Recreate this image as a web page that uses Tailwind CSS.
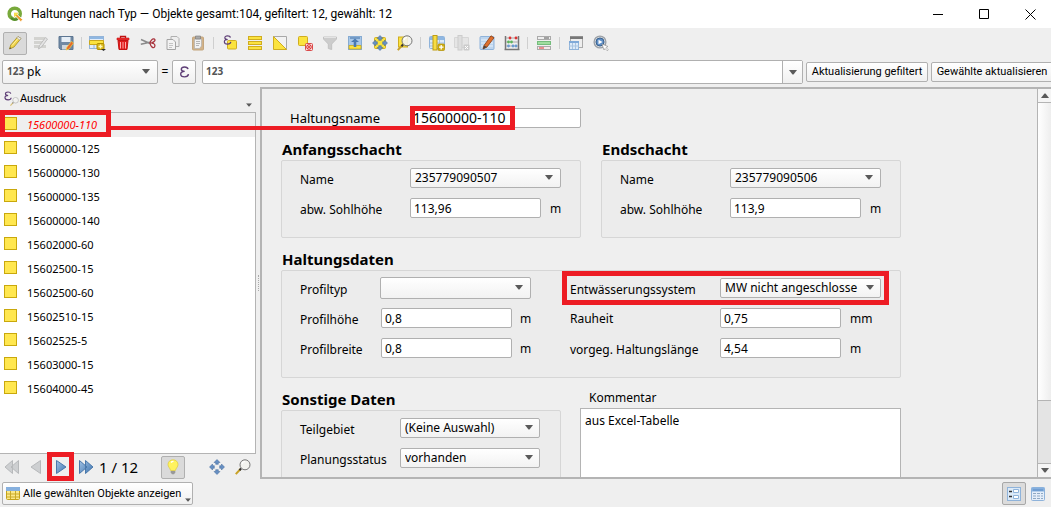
<!DOCTYPE html>
<html lang="de">
<head>
<meta charset="utf-8">
<title>Haltungen nach Typ</title>
<script src="https://cdn.jsdelivr.net/npm/@tailwindcss/browser@4"></script>
</head>
<body class="h-screen flex flex-col overflow-hidden bg-[#efefef] text-black text-[11px] leading-4 font-['Noto_Sans','Open_Sans',sans-serif]">

<svg class="absolute size-0" aria-hidden="true">
  <defs>
    <linearGradient id="blue" x1="0" y1="0" x2="1" y2="1"><stop offset="0" stop-color="#9fc0e4"/><stop offset="1" stop-color="#4076b0"/></linearGradient>
    <symbol id="down" viewBox="0 0 8 5"><path d="M0 0h8L4.500 4.500h-1z" fill="#5a5a5a"/></symbol>
    <symbol id="table" viewBox="0 0 16 16"><rect x=".5" y="1.500" width="15" height="12" rx="1" fill="#dceaf8" stroke="#8fb3da"/><path d="M1 2h14v3H1z" fill="#8fb7e2"/><path d="M1 8h14M1 11h14M5.500 5v8M10.500 5v8" stroke="#a8c3e0"/></symbol>
    <symbol id="arrows" viewBox="0 0 16 16"><g fill="#6790c4" stroke="#3f6699" stroke-width=".5"><path d="M8 .5l3 3H9.300v1.800H6.700V3.500H5z"/><path d="M8 15.500l3-3H9.300v-1.800H6.700v1.800H5z"/><path d="M.5 8l3-3v1.700h1.800v2.600H3.500V11z"/><path d="M15.500 8l-3-3v1.700h-1.800v2.600h1.800V11z"/></g></symbol>
    <symbol id="lens" viewBox="0 0 16 16"><path d="M.8 15.200L5.500 10" stroke="#c9a227" stroke-width="2"/><path d="M4.500 11.200l1.600-1.700" stroke="#333" stroke-width="2"/><circle cx="10" cy="5.800" r="5" fill="#f3f3ee" fill-opacity=".9" stroke="#777"/><path d="M7 5a3.200 3.200 0 0 1 3-2.500" fill="none" stroke="#fff" stroke-width="1.200"/></symbol>
    <symbol id="eps" viewBox="0 0 10 12"><path d="M8.500 3.200C8.200 1.500 6.500 1 5 1 3 1 1.800 1.900 1.800 3.300c0 1.400 1.200 2.100 3.400 2.100C2.800 5.400 1.200 6.300 1.200 8c0 1.900 1.700 2.900 3.900 2.900 2.300 0 3.600-.9 3.900-2.700" fill="none" stroke="#5e3e76" stroke-width="1.400"/></symbol>
  </defs>
</svg>

<!-- Title bar -->
<header class="h-7 shrink-0 flex items-center bg-white pl-[7px]">
  <svg class="size-4 mr-2" viewBox="0 0 16 16"><circle cx="7.700" cy="7.700" r="5.500" fill="none" stroke="#78a93b" stroke-width="3.600"/><path d="M4 12a5.500 5.500 0 0 0 7 .6" fill="none" stroke="#4f8a2c" stroke-width="2"/><path d="M7 6.800h4.300l-1 1.800 5.400 5-1.900 2.100-5-5.400L7 11.500z" fill="#ee9a28" stroke="#fff" stroke-width=".8"/><path d="M7 6.800h4.300l-1 1.800L7 11z" fill="#f4e04d"/></svg>
  <h1 class="flex-1 text-xs whitespace-nowrap font-['Roboto','Noto_Sans',sans-serif]">Haltungen nach Typ — Objekte gesamt:104, gefiltert: 12, gewählt: 12</h1>
  <button aria-label="Minimieren" class="w-[46px] h-6 grid place-items-center"><svg class="w-[11px] h-[11px]" viewBox="0 0 11 11"><path d="M0 5.500h10" stroke="#000"/></svg></button>
  <button aria-label="Maximieren" class="w-[46px] h-6 grid place-items-center"><svg class="w-[11px] h-[11px]" viewBox="0 0 11 11"><path d="M.5.5h9v9h-9z" fill="none" stroke="#000"/></svg></button>
  <button aria-label="Schließen" class="w-[46px] -mr-0.5 h-6 grid place-items-center"><svg class="w-[11px] h-[11px]" viewBox="0 0 11 11"><path d="M.5.5l10 10M10.500.5l-10 10" stroke="#000"/></svg></button>
</header>

<!-- Toolbar -->
<div role="toolbar" class="h-[31px] shrink-0 flex items-center pl-[3px] pb-px">
  <button aria-label="Bearbeiten" class="w-6 mr-px h-[23px] rounded-xs border border-[#b0b0b0] bg-[#dadada] grid place-items-center"><svg class="size-4" viewBox="0 0 16 16"><path d="M2.500 14l1.200-4L11 1.500l3 2L7 12z" fill="#f0d44c" stroke="#a58b1f" stroke-width=".8"/><path d="M11 1.500l3 2-1.200 1.500-3-2z" fill="#eee" stroke="#999" stroke-width=".6"/><path d="M2.500 14l.5-1.800 1.400 1z" fill="#444"/><path d="M5 10.500l6-7" stroke="#fff3a0"/></svg></button>
  <button aria-label="Mehrfachbearbeitung" class="w-[25px] h-6 grid place-items-center"><svg class="size-4" viewBox="0 0 16 16"><path d="M1 3.500h11M1 7.500h10M1 11.500h12" stroke="#d3d3d0" stroke-width="3"/><path d="M5.500 14l1-3.500 6-8 2 1.500-6 8z" fill="#e4e4e4" stroke="#b4b4b4" stroke-width=".8"/></svg></button>
  <button aria-label="Speichern" class="w-[25px] h-6 grid place-items-center"><svg class="size-4" viewBox="0 0 16 16"><path d="M1 1.500h14v13H2.500L1 13z" fill="#7189a3" stroke="#5d7692"/><path d="M3.500 2h9v5h-9z" fill="#e6eef6"/><path d="M4 10h7v4.500H4z" fill="#cfd6dd"/><path d="M8 15l1-3 4.500-5.500 2 1.500L11 14z" fill="#e8652c" stroke="#f4d940" stroke-width=".7"/></svg></button>
  <i class="w-[7px] h-3 grid place-items-center"><b class="w-px h-3 bg-[#cfcfcf]"></b></i>
  <button aria-label="Objekt hinzufügen" class="w-[25px] h-6 grid place-items-center"><svg class="w-[17px] h-4" viewBox="0 0 17 16"><rect x=".5" y="1.500" width="14" height="12" fill="#e3edf8" stroke="#93b4d8"/><path d="M1 2h13v2H1z" fill="#8fb7e2"/><path d="M.5 5.500h14v4H.5z" fill="#fbe33e" stroke="#c9a81c"/><path d="M5 10v3" stroke="#93b4d8"/><rect x="8" y="8.500" width="7" height="6" rx="1" fill="#d9b71d" stroke="#b19000"/><path d="M11.500 9.500v4M9.500 11.500h4" stroke="#fff8b8" stroke-width="1.300"/><path d="M12 14h5l-2.500 2z" fill="#333"/></svg></button>
  <button aria-label="Löschen" class="w-[25px] h-6 grid place-items-center"><svg class="size-4" viewBox="0 0 16 16"><path d="M3 5.500h10l-1 9h-8z" fill="#e01b1b" stroke="#c41414"/><path d="M2 3h12v2H2z" fill="#ee2c2c" stroke="#c41414" stroke-width=".6"/><path d="M5.500 3V1.500h5V3" fill="none" stroke="#c01010" stroke-width="1.300"/><path d="M5.500 7v6.500M8 7v6.500M10.500 7v6.500" stroke="#ffaaaa"/></svg></button>
  <button aria-label="Ausschneiden" class="w-[25px] h-6 grid place-items-center"><svg class="size-4" viewBox="0 0 16 16"><path d="M1 4.500l9.500 4.300M.8 9.300L11 7" stroke="#8a8a8a" stroke-width="1.500"/><path d="M10 8c1-3 2.500-4.500 4.300-4 1.500.6.500 3.200-3 4 3.200 0 4.200 2 3.200 4-1.200 1.800-3.800-.5-4.200-3z" fill="none" stroke="#a9343e" stroke-width="1.300"/></svg></button>
  <button aria-label="Kopieren" class="w-[25px] h-6 grid place-items-center"><svg class="size-4" viewBox="0 0 16 16"><path d="M6 1.500h6l2 2v8H6z" fill="#eee" stroke="#b0b0b0"/><path d="M2 4.500h6l2.500 2.500v7.500H2z" fill="#f3f3f3" stroke="#a4a4a4"/><path d="M4 8.500h4M4 10.500h4M4 12.500h3" stroke="#c4c4c4"/></svg></button>
  <button aria-label="Einfügen" class="w-[25px] h-6 grid place-items-center"><svg class="size-4" viewBox="0 0 16 16"><rect x="2.500" y="2" width="11" height="13" rx="1" fill="#d2b38a" stroke="#c4a67e"/><path d="M4.500 4h7v7l-2 2.500h-5z" fill="#f1f1f1" stroke="#aaa" stroke-width=".6"/><path d="M5.500 1h5v3h-5z" fill="#aaa" stroke="#777" stroke-width=".6"/><path d="M6 6.500h4M6 8.500h4M6 10.500h3" stroke="#b5b5b5"/></svg></button>
  <i class="w-[7px] h-3 grid place-items-center"><b class="w-px h-3 bg-[#cfcfcf]"></b></i>
  <button aria-label="Mit Ausdruck wählen" class="w-[25px] h-6 grid place-items-center"><svg class="size-4" viewBox="0 0 16 16"><rect x="5.500" y="5.500" width="9" height="8.500" rx="1" fill="#fbe33e" stroke="#d0ad1f"/><use href="#eps" x="1" y="0" width="9" height="10"/></svg></button>
  <button aria-label="Alle wählen" class="w-[25px] h-6 grid place-items-center"><svg class="size-4" viewBox="0 0 16 16"><g fill="#fbe33e" stroke="#d0ad1f"><rect x="1.500" y="1.500" width="13" height="3"/><rect x="1.500" y="6.500" width="13" height="3"/><rect x="1.500" y="11.500" width="13" height="3"/></g></svg></button>
  <button aria-label="Auswahl umkehren" class="w-[25px] h-6 grid place-items-center"><svg class="size-4" viewBox="0 0 16 16"><path d="M1.500 1.500h13v13z" fill="#f2f2f2" stroke="#a8a8a8"/><path d="M1.500 1.500v13h13z" fill="#fbe33e" stroke="#d0ad1f"/></svg></button>
  <button aria-label="Auswahl aufheben" class="w-[25px] h-6 grid place-items-center"><svg class="size-4" viewBox="0 0 16 16"><rect x="1.500" y="1.500" width="9" height="9" rx="1" fill="#fbe33e" stroke="#d0ad1f"/><rect x="8.500" y="8.500" width="7" height="7" rx="1" fill="#fbdede" stroke="#da4a4a"/><circle cx="12" cy="12" r="2.300" fill="none" stroke="#d83030"/><path d="M10 10l4 4M14 10l-4 4" stroke="#d83030" stroke-width=".8"/></svg></button>
  <button aria-label="Filtern" class="w-[25px] h-6 grid place-items-center"><svg class="size-4" viewBox="0 0 16 16"><path d="M1.500 2h13v2L9.700 9v5.500l-3.400-1V9L1.500 4z" fill="#cccccc" stroke="#c2c2c2"/><path d="M2 2.500h12" stroke="#e4e4e4"/></svg></button>
  <button aria-label="Auswahl nach oben" class="w-[25px] h-6 grid place-items-center"><svg class="size-4" viewBox="0 0 16 16"><rect x="1.500" y="1.500" width="13" height="13" fill="#a9c8e8" stroke="#86abd2"/><path d="M2 10.500h12v3.500H2z" fill="#fbe33e" stroke="#c9a81c" stroke-width=".8"/><path d="M3 3h10" stroke="#3f6ea5"/><path d="M8 3.500l4 3.500H9.300v5H6.700V7H4z" fill="#4a7ab2"/></svg></button>
  <button aria-label="Zur Auswahl schieben" class="w-[25px] h-6 grid place-items-center"><svg class="size-4" viewBox="0 0 16 16"><rect x="2.500" y="2.500" width="11" height="11" rx="1" fill="#fbe33e" stroke="#d0ad1f"/><use href="#arrows" width="16" height="16"/></svg></button>
  <button aria-label="Auf Auswahl zoomen" class="w-[25px] h-6 grid place-items-center"><svg class="size-4" viewBox="0 0 16 16"><rect x="1.500" y="2" width="9" height="10" fill="#fbe33e" stroke="#d0ad1f"/><use href="#lens" width="16" height="16"/></svg></button>
  <i class="w-[7px] h-3 grid place-items-center"><b class="w-px h-3 bg-[#cfcfcf]"></b></i>
  <button aria-label="Neues Feld" class="w-[25px] h-6 grid place-items-center"><svg class="size-4" viewBox="0 0 16 16"><use href="#table" width="16" height="16"/><rect x="4" y=".5" width="4" height="14.500" fill="#f7dd45" stroke="#c09d12"/><rect x="9" y="9" width="6.500" height="6.500" rx="1" fill="#d0ae14" stroke="#b19000" stroke-width=".7"/><path d="M12.200 10v4.500M10 12.200h4.500" stroke="#fff" stroke-width="1.300"/></svg></button>
  <button aria-label="Feld löschen" class="w-[25px] h-6 grid place-items-center"><svg class="size-4" viewBox="0 0 16 16"><path d="M.5 2.500h14v10H.5z" fill="#e5e5e5" stroke="#d6d6d6"/><rect x="4" y=".5" width="4" height="14.500" fill="#dedede" stroke="#cccccc"/><rect x="9.500" y="9.500" width="6" height="6" rx="1" fill="#ccc"/><path d="M11 11l3 3M14 11l-3 3" stroke="#fff"/></svg></button>
  <button aria-label="Felder organisieren" class="w-[25px] h-6 grid place-items-center"><svg class="size-4" viewBox="0 0 16 16"><rect x="1" y="1.500" width="14" height="13" rx="1" fill="#bdd5ee" stroke="#8fb3da"/><path d="M2 5h12M2 8h12M2 11h12" stroke="#e8f1fa"/><path d="M4 14l1-3.500L12 .8l3 2L8 12z" fill="#dd6f2d" stroke="#8a3d12" stroke-width=".8"/><path d="M4 14l1-3.500 3 1.500z" fill="#444"/></svg></button>
  <button aria-label="Feldrechner" class="w-[25px] h-6 grid place-items-center"><svg class="size-4" viewBox="0 0 16 16"><path d="M1.500 1v14M14.500 1v14M.5 14.500h15" stroke="#777" stroke-width="1.500"/><path d="M2 3h12M2 7h12M2 11h12" stroke="#aaa"/><g fill="#d33"><circle cx="6" cy="3" r="1.400"/><circle cx="12" cy="3" r="1.400"/></g><g fill="#5cb55c"><circle cx="4.500" cy="7" r="1.400"/><circle cx="7.500" cy="7" r="1.400"/></g><g fill="#6a9bd0"><circle cx="4.500" cy="11" r="1.400"/><circle cx="9" cy="11" r="1.400"/><circle cx="12" cy="11" r="1.400"/></g></svg></button>
  <i class="w-[7px] h-3 grid place-items-center"><b class="w-px h-3 bg-[#cfcfcf]"></b></i>
  <button aria-label="Bedingte Formatierung" class="w-[25px] h-6 grid place-items-center"><svg class="size-4" viewBox="0 0 16 16"><rect x="1.500" y="1.500" width="13" height="3" fill="#eee" stroke="#aaa"/><rect x="1.500" y="6.500" width="13" height="3" fill="#9fdd9f" stroke="#74bd7c"/><rect x="1.500" y="11.500" width="13" height="3" fill="#f3eaea" stroke="#aaa"/><path d="M8 3h5" stroke="#555"/><path d="M3 13h5" stroke="#d33"/></svg></button>
  <i class="w-[7px] h-3 grid place-items-center"><b class="w-px h-3 bg-[#cfcfcf]"></b></i>
  <button aria-label="Andocken" class="w-[25px] h-6 grid place-items-center"><svg class="size-4" viewBox="0 0 16 16"><rect x="2.500" y="1.500" width="12" height="11" fill="#eee" stroke="#aaa"/><path d="M2 1.500h13v2.500H2z" fill="#777"/><rect x="1.500" y="6.500" width="9" height="8" fill="#dceaf8" stroke="#8fb3da"/><path d="M1 7h10" stroke="#7fa9d8" stroke-width="2"/><path d="M4.500 8v6M7.500 8v6M1 11h10" stroke="#a8c3e0"/></svg></button>
  <button aria-label="Aktionen" class="w-[25px] h-6 grid place-items-center"><svg class="size-4" viewBox="0 0 16 16"><circle cx="7" cy="7" r="5.900" fill="#d4d7da" stroke="#9ba0a6" stroke-width="1.300"/><circle cx="7" cy="7" r="4" fill="#5f8fc6" stroke="#39618f"/><path d="M5.500 4.800L9.500 7l-4 2.200z" fill="#fff"/><path d="M9 9l6 2.500-2 1 2.300 2.300-1 1L12 13.500 11 15z" fill="#fff" stroke="#888" stroke-width=".6"/></svg></button>
</div>

<!-- Field calculator bar -->
<div class="h-[27px] shrink-0 flex items-start pl-[2px] pt-px">
  <div class="relative w-[156px] h-6 shrink-0">
    <select aria-label="Feld" class="appearance-none size-full pl-6 rounded-xs border border-[#b0b0b0] bg-linear-to-b from-white to-[#f0f0f0] text-xs leading-5"><option>pk</option></select>
    <span class="absolute left-[5px] top-[3px] text-[10px] font-bold text-[#555]">123</span>
    <svg class="absolute right-2 top-[9px] w-2 h-[5px] pointer-events-none"><use href="#down"/></svg>
  </div>
  <span class="w-[14px] text-center text-xs leading-6">=</span>
  <button aria-label="Ausdruckseditor" class="w-6 h-6 shrink-0 rounded-xs border border-[#b0b0b0] bg-linear-to-b from-white to-[#f0f0f0] grid place-items-center"><svg class="w-[11px] h-3"><use href="#eps"/></svg></button>
  <div class="relative flex-1 h-6 ml-1.5 mr-[3px] flex rounded-xs border border-[#b0b0b0] bg-white">
    <span class="absolute left-[3px] top-[2px] text-[10px] font-bold text-[#555]">123</span>
    <input type="text" aria-label="Ausdruck" class="flex-1 min-w-0 pl-6 outline-none">
    <button aria-label="Verlauf" class="w-5 border-l border-[#b0b0b0] bg-linear-to-b from-white to-[#f0f0f0] grid place-items-center"><svg class="w-2 h-[5px]"><use href="#down"/></svg></button>
  </div>
  <button class="w-[122px] h-5 mt-0.5 mr-[3px] shrink-0 whitespace-nowrap rounded-xs border border-[#b0b0b0] bg-linear-to-b from-white to-[#f0f0f0] font-['Roboto','Noto_Sans',sans-serif]">Aktualisierung gefiltert</button>
  <button class="w-[122px] h-5 mt-0.5 -mr-0.5 shrink-0 whitespace-nowrap rounded-xs border border-[#b0b0b0] bg-linear-to-b from-white to-[#f0f0f0] font-['Roboto','Noto_Sans',sans-serif]">Gewählte aktualisieren</button>
</div>

<main class="relative flex-1 min-h-0 flex">
  <!-- Feature list -->
  <section class="w-[256px] shrink-0 flex flex-col">
    <button class="h-[26px] shrink-0 flex items-center pl-1 pr-1 text-left">
      <svg class="w-4 h-4" viewBox="0 0 16 16"><use href="#eps" width="8" height="10"/><g opacity=".6"><use href="#lens" x="6" y="6" width="9" height="9"/></g></svg>
      <span class="flex-1 font-['Roboto','Noto_Sans',sans-serif]">Ausdruck</span>
      <svg class="w-[6px] h-1 mt-3" viewBox="0 0 8 5"><use href="#down"/></svg>
    </button>
    <ul class="flex-1 min-h-0 overflow-hidden bg-white border border-l-0 border-[#b4b4b4]">
      <li class="h-6 flex items-center pl-1 bg-[#efefef] italic text-[#f00]"><i class="size-[13px] mr-[10px] mb-1 bg-[#ffe74f] border border-[#c9a80c]"></i>15600000-110</li>
      <li class="h-6 flex items-center pl-1"><i class="size-[13px] mr-[10px] mb-1 bg-[#ffe74f] border border-[#c9a80c]"></i>15600000-125</li>
      <li class="h-6 flex items-center pl-1"><i class="size-[13px] mr-[10px] mb-1 bg-[#ffe74f] border border-[#c9a80c]"></i>15600000-130</li>
      <li class="h-6 flex items-center pl-1"><i class="size-[13px] mr-[10px] mb-1 bg-[#ffe74f] border border-[#c9a80c]"></i>15600000-135</li>
      <li class="h-6 flex items-center pl-1"><i class="size-[13px] mr-[10px] mb-1 bg-[#ffe74f] border border-[#c9a80c]"></i>15600000-140</li>
      <li class="h-6 flex items-center pl-1"><i class="size-[13px] mr-[10px] mb-1 bg-[#ffe74f] border border-[#c9a80c]"></i>15602000-60</li>
      <li class="h-6 flex items-center pl-1"><i class="size-[13px] mr-[10px] mb-1 bg-[#ffe74f] border border-[#c9a80c]"></i>15602500-15</li>
      <li class="h-6 flex items-center pl-1"><i class="size-[13px] mr-[10px] mb-1 bg-[#ffe74f] border border-[#c9a80c]"></i>15602500-60</li>
      <li class="h-6 flex items-center pl-1"><i class="size-[13px] mr-[10px] mb-1 bg-[#ffe74f] border border-[#c9a80c]"></i>15602510-15</li>
      <li class="h-6 flex items-center pl-1"><i class="size-[13px] mr-[10px] mb-1 bg-[#ffe74f] border border-[#c9a80c]"></i>15602525-5</li>
      <li class="h-6 flex items-center pl-1"><i class="size-[13px] mr-[10px] mb-1 bg-[#ffe74f] border border-[#c9a80c]"></i>15603000-15</li>
      <li class="h-6 flex items-center pl-1"><i class="size-[13px] mr-[10px] mb-1 bg-[#ffe74f] border border-[#c9a80c]"></i>15604000-45</li>
    </ul>
    <nav class="h-[26px] shrink-0 flex items-center">
      <button aria-label="Erstes" class="w-6 h-6 grid place-items-center"><svg class="size-4" viewBox="0 0 16 16"><path d="M8.500 1.500v13L1 8zM14.500 1.500v13L7 8z" fill="#cdcfd1" stroke="#b7b9bb"/></svg></button>
      <button aria-label="Vorheriges" class="w-6 h-6 grid place-items-center"><svg class="size-4" viewBox="0 0 16 16"><path d="M12.500 1.500v13L3 8z" fill="#cdcfd1" stroke="#b7b9bb"/></svg></button>
      <button aria-label="Nächstes" class="relative w-[25px] h-6 grid place-items-center"><svg class="size-4" viewBox="0 0 16 16"><path d="M3.500 1.500v13L13 8z" fill="url(#blue)" stroke="#4a78ab"/></svg><b class="absolute -left-px -top-[3px] w-[27px] h-[29px] border-5 border-[#ed1c24]"></b></button>
      <button aria-label="Letztes" class="w-[25px] h-6 grid place-items-center"><svg class="size-4" viewBox="0 0 16 16"><path d="M1.500 1.500v13L9 8zM7.500 1.500v13L15 8z" fill="url(#blue)" stroke="#4a78ab"/></svg></button>
      <output class="w-[63px] pl-px text-[15px] leading-5 whitespace-nowrap">1 / 12</output>
      <button aria-label="Hervorheben" class="w-6 h-[23px] rounded-xs border border-[#b0b0b0] bg-[#dadada] grid place-items-center"><svg class="size-4" viewBox="0 0 16 16"><path d="M8 .8c3 0 5 2.100 5 4.700 0 2.400-2 3.500-2.600 6H5.600C5 9 3 7.900 3 5.500 3 2.900 5 .8 8 .8z" fill="#fff35e" stroke="#ddc93a" stroke-width=".7"/><path d="M5.700 12h4.600v1.500L9 15.300H7L5.700 13.500z" fill="#999"/><path d="M6 3.500A3 3 0 0 1 8.500 2.300" fill="none" stroke="#fff" stroke-width="1.300"/></svg></button>
      <button aria-label="Schwenken" class="w-6 h-6 ml-5 grid place-items-center"><svg class="size-4"><use href="#arrows"/></svg></button>
      <button aria-label="Zoomen" class="w-6 h-6 ml-0.5 grid place-items-center"><svg class="size-4"><use href="#lens"/></svg></button>
    </nav>
  </section>
  <div class="w-1 shrink-0 grid place-items-center"><i class="h-4 border-l border-dotted border-[#aaa]"></i></div>

  <!-- Form -->
  <section class="flex-1 min-w-0 mt-px mb-px flex border-2 border-r-0 border-[#b4b4b4]">
    <form class="flex-1 min-w-0 overflow-hidden pl-[19px] pt-[19px] text-xs leading-4">
      <div class="flex items-center h-5 pl-[9px]">
        <label for="hn" class="w-[121px] text-[13px]">Haltungsname</label>
        <div class="relative">
          <input id="hn" value="15600000-110" class="block w-[170px] h-5 px-px rounded-xs border border-[#b0b0b0] bg-white text-sm">
          <b class="absolute -left-px -top-0.5 w-[105px] h-6 border-5 border-[#ed1c24] pointer-events-none"></b>
        </div>
      </div>
      <div class="flex gap-5 pt-3">
        <section class="w-[300px] shrink-0">
          <h2 class="h-5 pl-px text-[15px] leading-[18px] font-bold">Anfangsschacht</h2>
          <div class="h-[78px] pl-[18px] pt-[7px] flex flex-col gap-2.5 rounded-xs border border-[#d6d6d6] bg-[#ececec]">
            <div class="flex items-center h-5"><label for="an" class="w-[110px] pt-1">Name</label><div class="relative w-[151px] h-5"><select id="an" class="appearance-none block size-full pl-1 rounded-xs border border-[#b0b0b0] bg-linear-to-b from-white to-[#f2f2f2]"><option>235779090507</option></select><svg class="absolute right-2 top-[7px] w-2 h-[5px] pointer-events-none"><use href="#down"/></svg></div></div>
            <div class="flex items-center h-5"><label for="as" class="w-[110px] pt-1">abw. Sohlhöhe</label><input id="as" value="113,96" class="w-[131px] h-5 px-[3px] rounded-xs border border-[#b0b0b0] bg-white"><span class="pl-[9px] pt-0.5">m</span></div>
          </div>
        </section>
        <section class="w-[300px] shrink-0">
          <h2 class="h-5 pl-px text-[15px] leading-[18px] font-bold">Endschacht</h2>
          <div class="h-[78px] pl-[18px] pt-[7px] flex flex-col gap-2.5 rounded-xs border border-[#d6d6d6] bg-[#ececec]">
            <div class="flex items-center h-5"><label for="en" class="w-[110px] pt-1">Name</label><div class="relative w-[151px] h-5"><select id="en" class="appearance-none block size-full pl-1 rounded-xs border border-[#b0b0b0] bg-linear-to-b from-white to-[#f2f2f2]"><option>235779090506</option></select><svg class="absolute right-2 top-[7px] w-2 h-[5px] pointer-events-none"><use href="#down"/></svg></div></div>
            <div class="flex items-center h-5"><label for="es" class="w-[110px] pt-1">abw. Sohlhöhe</label><input id="es" value="113,9" class="w-[131px] h-5 px-[3px] rounded-xs border border-[#b0b0b0] bg-white"><span class="pl-[9px] pt-0.5">m</span></div>
          </div>
        </section>
      </div>
      <section class="w-[620px] pt-3">
        <h2 class="h-5 pl-px text-[15px] leading-[18px] font-bold">Haltungsdaten</h2>
        <div class="h-[108px] pl-[18px] pt-[7px] flex rounded-xs border border-[#d6d6d6] bg-[#ececec]">
          <div class="w-[270px] shrink-0 flex flex-col gap-2.5">
            <div class="flex items-center h-5"><label for="pt" class="w-20 pt-1">Profiltyp</label><div class="relative w-[151px] h-[22px]"><select id="pt" class="appearance-none block size-full pl-1 rounded-xs border border-[#b0b0b0] bg-linear-to-b from-white to-[#f2f2f2]"><option></option></select><svg class="absolute right-2 top-2 w-2 h-[5px] pointer-events-none"><use href="#down"/></svg></div></div>
            <div class="flex items-center h-5"><label for="ph" class="w-[81px] pt-1">Profilhöhe</label><input id="ph" value="0,8" class="w-[131px] h-5 px-[3px] rounded-xs border border-[#b0b0b0] bg-white"><span class="pl-2 pt-0.5">m</span></div>
            <div class="flex items-center h-5"><label for="pb" class="w-[81px] pt-1">Profilbreite</label><input id="pb" value="0,8" class="w-[131px] h-5 px-[3px] rounded-xs border border-[#b0b0b0] bg-white"><span class="pl-2 pt-0.5">m</span></div>
          </div>
          <div class="flex-1 flex flex-col gap-2.5">
            <div class="relative flex items-center h-5"><label for="ew" class="w-[150px] pt-1">Entwässerungssystem</label><div class="relative w-[161px] h-5"><select id="ew" class="appearance-none block size-full pl-1 rounded-xs border border-[#b0b0b0] bg-linear-to-b from-white to-[#f2f2f2]"><option>MW nicht angeschlosse</option></select><svg class="absolute right-[7px] top-[7px] w-2 h-[5px] pointer-events-none"><use href="#down"/></svg></div><b class="absolute -left-2 -top-[7px] w-[327px] h-[34px] border-5 border-[#ed1c24] pointer-events-none"></b></div>
            <div class="flex items-center h-5"><label for="ra" class="w-[150px] pt-0.5">Rauheit</label><input id="ra" value="0,75" class="w-[121px] h-5 px-[3px] rounded-xs border border-[#b0b0b0] bg-white"><span class="pl-[9px] pt-0.5">mm</span></div>
            <div class="flex items-center h-5"><label for="hl" class="w-[150px] pt-1">vorgeg. Haltungslänge</label><input id="hl" value="4,54" class="w-[121px] h-5 px-[3px] rounded-xs border border-[#b0b0b0] bg-white"><span class="pl-[9px] pt-0.5">m</span></div>
          </div>
        </div>
      </section>
      <div class="flex pt-3">
        <section class="w-[280px] shrink-0">
          <h2 class="h-5 pl-px text-[15px] leading-[18px] font-bold">Sonstige Daten</h2>
          <div class="h-[108px] pl-[18px] pt-[7px] flex flex-col gap-2.5 rounded-xs border border-[#d6d6d6] bg-[#ececec]">
            <div class="flex items-center h-5"><label for="tg" class="w-[100px] pt-1">Teilgebiet</label><div class="relative w-[140px] h-5"><select id="tg" class="appearance-none block size-full pl-1 rounded-xs border border-[#b0b0b0] bg-linear-to-b from-white to-[#f2f2f2]"><option>(Keine Auswahl)</option></select><svg class="absolute right-[7px] top-[7px] w-2 h-[5px] pointer-events-none"><use href="#down"/></svg></div></div>
            <div class="flex items-center h-5"><label for="ps" class="w-[100px] pt-1">Planungsstatus</label><div class="relative w-[140px] h-5"><select id="ps" class="appearance-none block size-full pl-1 rounded-xs border border-[#b0b0b0] bg-linear-to-b from-white to-[#f2f2f2]"><option>vorhanden</option></select><svg class="absolute right-[7px] top-[7px] w-2 h-[5px] pointer-events-none"><use href="#down"/></svg></div></div>
          </div>
        </section>
        <div class="w-[321px] shrink-0 ml-[19px]">
          <label for="ko" class="block h-[18px] pl-[9px]">Kommentar</label>
          <textarea id="ko" class="block w-full h-[111px] px-1 py-1 resize-none border border-[#b4b4b4] bg-white">aus Excel-Tabelle</textarea>
        </div>
      </div>
    </form>
    <!-- Vertical scroll bar -->
    <div class="w-[14px] shrink-0 flex flex-col border-l border-[#b4b4b4] bg-[#e4e4e4]">
      <button type="button" aria-label="Nach oben" class="h-[14px] grid place-items-center bg-[#f5f5f5] border-b border-[#b4b4b4]"><svg class="w-2 h-[5px] rotate-180"><use href="#down"/></svg></button>
      <div class="basis-0 grow-[298] bg-linear-to-r from-white to-[#eeeeee] border-b border-[#b4b4b4]"></div>
      <div class="basis-0 grow-[62]"></div>
      <button type="button" aria-label="Nach unten" class="h-[14px] grid place-items-center bg-[#f5f5f5] border-t border-[#b4b4b4]"><svg class="w-2 h-[5px]"><use href="#down"/></svg></button>
    </div>
  </section>
  <!-- Marked list entry and its connector to the name field -->
  <b class="absolute left-0 top-6 w-[111px] h-[27px] border-5 border-[#ed1c24] pointer-events-none"></b>
  <i class="absolute left-[110px] top-10 w-[302px] h-1 bg-[#ed1c24]"></i>
</main>

<footer class="h-[27px] shrink-0 flex items-center justify-between pl-[2px] pr-px">
  <button class="w-[191px] h-[23px] flex items-center pl-[3px] rounded-xs border border-[#b0b0b0] bg-linear-to-b from-white to-[#f0f0f0] whitespace-nowrap font-['Roboto','Noto_Sans',sans-serif]">
    <svg class="w-[14px] h-[13px] mr-[3px] shrink-0" viewBox="0 0 14 13"><rect x=".5" y=".5" width="13" height="12" rx="1" fill="#fbe98a" stroke="#c4a21a"/><path d="M0 0h14v4H0z" fill="#86b0de"/><path d="M1 7h12M1 10h12M4.500 4v8M9.500 4v8" stroke="#c9aa28"/></svg>
    <span class="flex-1 text-left">Alle gewählten Objekte anzeigen</span>
    <svg class="w-[6px] h-1 mt-3 mr-px shrink-0" viewBox="0 0 8 5"><use href="#down"/></svg>
  </button>
  <div class="flex">
    <button aria-label="Formularansicht" class="w-6 h-[23px] rounded-xs border border-[#a8a8a8] bg-[#dcdcdc] grid place-items-center"><svg class="size-4" viewBox="0 0 16 16"><rect x="1.500" y="1.500" width="13" height="13" fill="#dceaf8" stroke="#8fb3da"/><path d="M3 5.500h3M3 10.500h3" stroke="#333" stroke-width="1.300"/><path d="M7.500 3.500h5v3h-5zM7.500 9.500h5v3h-5z" fill="#fff" stroke="#8fb3da"/></svg></button>
    <button aria-label="Tabellenansicht" class="w-6 h-[23px] grid place-items-center"><svg class="size-4" viewBox="0 0 16 16"><rect x="1.500" y="1.500" width="13" height="13" rx="1" fill="#e4eefa" stroke="#8fb3da"/><path d="M1.500 1.500h13v4h-13z" fill="#86b0de"/><path d="M3 4h10" stroke="#5d8dc6"/><path d="M3 7.500h10M3 10h10M3 12.500h10" stroke="#8fa9c4" stroke-dasharray="3 1"/></svg></button>
  </div>
</footer>
</body>
</html>
